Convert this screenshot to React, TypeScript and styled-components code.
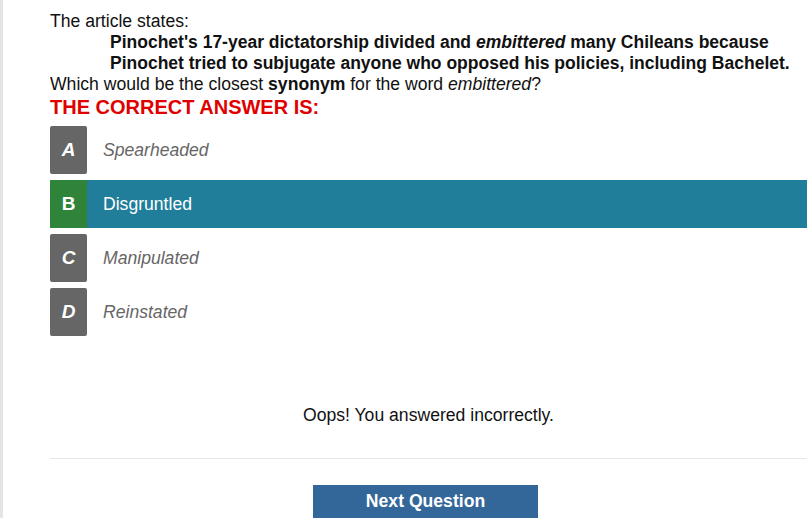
import React from "react";
import styled, { createGlobalStyle } from "styled-components";

const Global = createGlobalStyle`
  html, body { margin: 0; padding: 0; background: #fff; }
  body { font-family: "Liberation Sans", Arial, sans-serif; color: #111; }
`;

const Page = styled.div`
  min-height: 100vh;
  border-left: 3px solid #e5e5e5;
  padding: 11px 0 0 47px;
  box-sizing: border-box;
`;

const Text = styled.p`
  margin: 0;
  font-size: 17.6px;
  line-height: 21px;
`;

const Quote = styled.blockquote`
  margin: 0 0 0 60px;
  font-size: 17.5px;
  line-height: 21px;
  font-weight: bold;
`;

const Heading = styled.h2`
  margin: 0;
  color: #e00000;
  font-size: 20px;
  line-height: 24px;
  font-weight: bold;
`;

const Options = styled.div`
  display: flex;
  flex-direction: column;
  gap: 6px;
  margin-top: 7px;
`;

const Row = styled.div<{ $selected?: boolean }>`
  display: flex;
  align-items: center;
  height: 48px;
  background: ${(p) => (p.$selected ? "#207e9a" : "transparent")};
`;

const Letter = styled.div<{ $correct?: boolean }>`
  width: 37px;
  height: 48px;
  flex: none;
  display: flex;
  align-items: center;
  justify-content: center;
  border-radius: ${(p) => (p.$correct ? "0" : "2px")};
  background: ${(p) => (p.$correct ? "#30843a" : "#666666")};
  color: #fff;
  font-weight: bold;
  font-style: ${(p) => (p.$correct ? "normal" : "italic")};
  font-size: 19px;
`;

const Label = styled.span<{ $selected?: boolean }>`
  padding-left: 16px;
  font-size: 17.6px;
  font-style: ${(p) => (p.$selected ? "normal" : "italic")};
  color: ${(p) => (p.$selected ? "#fff" : "#666")};
`;

const Feedback = styled.p`
  margin: 69px 0 0;
  text-align: center;
  font-size: 17.6px;
  line-height: 21px;
  color: #111;
`;

const Rule = styled.hr`
  margin: 32px 0 0;
  border: 0;
  border-top: 1px solid #e6e6e6;
`;

const Footer = styled.div`
  display: flex;
  justify-content: center;
  padding: 26px 6px 0 0;
`;

const NextButton = styled.button`
  width: 225px;
  height: 36px;
  border: 0;
  background: #336699;
  color: #fff;
  font-family: "Liberation Sans", Arial, sans-serif;
  font-weight: bold;
  font-size: 17.6px;
  padding: 0 0 4px;
`;

const options = [
  { letter: "A", text: "Spearheaded" },
  { letter: "B", text: "Disgruntled", selected: true, correct: true },
  { letter: "C", text: "Manipulated" },
  { letter: "D", text: "Reinstated" },
];

export default function App() {
  return (
    <>
      <Global />
      <Page>
        <Text>The article states:</Text>
        <Quote>
          Pinochet's 17-year dictatorship divided and <i>embittered</i> many Chileans because
          <br />
          Pinochet tried to subjugate anyone who opposed his policies, including Bachelet.
        </Quote>
        <Text>
          Which would be the closest <b>synonym</b> for the word <i>embittered</i>?
        </Text>
        <Heading>THE CORRECT ANSWER IS:</Heading>
        <Options>
          {options.map((o) => (
            <Row key={o.letter} $selected={o.selected}>
              <Letter $correct={o.correct}>{o.letter}</Letter>
              <Label $selected={o.selected}>{o.text}</Label>
            </Row>
          ))}
        </Options>
        <Feedback>Oops! You answered incorrectly.</Feedback>
        <Rule />
        <Footer>
          <NextButton>Next Question</NextButton>
        </Footer>
      </Page>
    </>
  );
}
